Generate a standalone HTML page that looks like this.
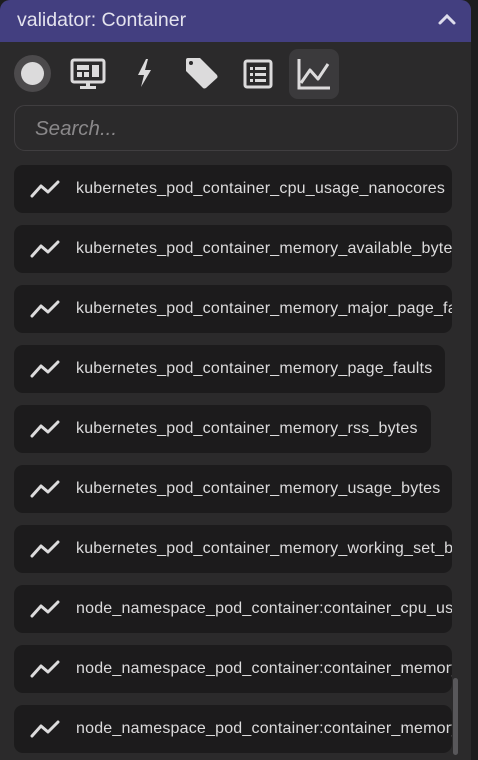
<!DOCTYPE html>
<html><head><style>
*{box-sizing:border-box;margin:0;padding:0}
body{width:478px;height:760px;background:#1d1d1e;font-family:"Liberation Sans",sans-serif;overflow:hidden;position:relative}
.panel{position:absolute;left:0;top:0;width:471px;height:760px;background:#2b2a2b;border-radius:10px 10px 0 0;overflow:hidden}
.hdr{height:42px;background:#433f80;color:#e4e3ee;font-size:19.5px;padding:9px 0 0 17px;position:relative}
.hdr svg{position:absolute;right:14px;top:12px}
.tools{position:absolute;top:48px;left:0;width:471px;height:52px}
.tools>*{position:absolute}
.search{position:absolute;left:14px;top:105px;width:444px;height:46px;border:1px solid #403e40;border-radius:11px;color:#8a888a;font-style:italic;font-size:20.5px;padding:11px 0 0 20px}
.list{position:absolute;left:14px;top:165px;width:438px;overflow:hidden}
.item{display:block;width:max-content;max-width:438px;height:48px;margin-bottom:12px;background:#1c1b1c;border-radius:9px;color:#dcdbdc;font-size:16px;letter-spacing:0.2px;line-height:48px;padding:0 13px 0 62px;position:relative;white-space:nowrap;overflow:hidden}
.item svg{position:absolute;left:16px;top:15px}
.sb{position:absolute;left:453px;top:678px;width:5px;height:77px;background:#58575a;border-radius:3px}
</style></head><body>
<div class="panel">
<div class="hdr">validator: Container
<svg width="20" height="14" viewBox="0 0 20 14"><path d="M3 11 L10 4 L17 11" fill="none" stroke="#dddcec" stroke-width="3" stroke-linecap="round"/></svg></div>
<div class="tools">
<div style="left:14px;top:7px;width:37px;height:37px;border-radius:50%;background:#4c4a4c"></div>
<div style="left:21px;top:14px;width:23px;height:23px;border-radius:50%;background:#dcdbdc"></div>
<svg style="left:70px;top:10px" width="36" height="32" viewBox="0 0 36 32"><rect x="2" y="2" width="32" height="22" rx="2" fill="none" stroke="#dcdbdc" stroke-width="3"/><rect x="7" y="7" width="12" height="5" fill="#dcdbdc"/><rect x="22" y="7" width="7" height="12" fill="#dcdbdc"/><rect x="7" y="14" width="5" height="5" fill="#dcdbdc"/><rect x="14" y="14" width="5" height="5" fill="#dcdbdc"/><rect x="16" y="24" width="4" height="4" fill="#dcdbdc"/><rect x="10" y="28" width="16" height="3" fill="#dcdbdc"/></svg>
<svg style="left:135px;top:10px" width="20" height="30" viewBox="0 0 20 30"><path d="M11 1 L3 17 L9 17 L6 29 L16 12 L10 12 L13 1Z" fill="#dcdbdc"/></svg>
<svg style="left:184px;top:8px" width="36" height="34" viewBox="0 0 36 34"><path d="M2 4 Q2 2 4 2 L16 2 L33 19 Q34 21 33 22 L22 32 Q20 33 19 32 L2 15Z" fill="#dcdbdc"/><circle cx="7" cy="7" r="2" fill="#2b2a2b"/></svg>
<svg style="left:243px;top:11px" width="30" height="30" viewBox="0 0 30 30"><rect x="2" y="2" width="26" height="26" rx="2" fill="none" stroke="#dcdbdc" stroke-width="3"/><rect x="7" y="8" width="3" height="3" fill="#dcdbdc"/><rect x="12" y="8" width="11" height="3" fill="#dcdbdc"/><rect x="7" y="14" width="3" height="3" fill="#dcdbdc"/><rect x="12" y="14" width="11" height="3" fill="#dcdbdc"/><rect x="7" y="20" width="3" height="3" fill="#dcdbdc"/><rect x="12" y="20" width="11" height="3" fill="#dcdbdc"/></svg>
<div style="left:289px;top:1px;width:50px;height:50px;border-radius:9px;background:#3b3a3c"></div>
<svg style="left:296px;top:9px" width="36" height="34" viewBox="0 0 36 34"><path d="M3 2 L3 31 L34 31" fill="none" stroke="#dcdbdc" stroke-width="3"/><path d="M5 26 L14 13 L22 22 L32 7" fill="none" stroke="#dcdbdc" stroke-width="3" stroke-linejoin="round"/></svg>
</div>
<div class="search">Search...</div>
<div class="list">
<div class="item"><svg width="30" height="18" viewBox="0 0 30 18"><path d="M2 16 L11 6 L18 12 L28 2" fill="none" stroke="#dcdbdc" stroke-width="3" stroke-linecap="round" stroke-linejoin="round"/></svg>kubernetes_pod_container_cpu_usage_nanocores</div>
<div class="item"><svg width="30" height="18" viewBox="0 0 30 18"><path d="M2 16 L11 6 L18 12 L28 2" fill="none" stroke="#dcdbdc" stroke-width="3" stroke-linecap="round" stroke-linejoin="round"/></svg>kubernetes_pod_container_memory_available_bytes</div>
<div class="item"><svg width="30" height="18" viewBox="0 0 30 18"><path d="M2 16 L11 6 L18 12 L28 2" fill="none" stroke="#dcdbdc" stroke-width="3" stroke-linecap="round" stroke-linejoin="round"/></svg>kubernetes_pod_container_memory_major_page_faults</div>
<div class="item"><svg width="30" height="18" viewBox="0 0 30 18"><path d="M2 16 L11 6 L18 12 L28 2" fill="none" stroke="#dcdbdc" stroke-width="3" stroke-linecap="round" stroke-linejoin="round"/></svg>kubernetes_pod_container_memory_page_faults</div>
<div class="item"><svg width="30" height="18" viewBox="0 0 30 18"><path d="M2 16 L11 6 L18 12 L28 2" fill="none" stroke="#dcdbdc" stroke-width="3" stroke-linecap="round" stroke-linejoin="round"/></svg>kubernetes_pod_container_memory_rss_bytes</div>
<div class="item"><svg width="30" height="18" viewBox="0 0 30 18"><path d="M2 16 L11 6 L18 12 L28 2" fill="none" stroke="#dcdbdc" stroke-width="3" stroke-linecap="round" stroke-linejoin="round"/></svg>kubernetes_pod_container_memory_usage_bytes</div>
<div class="item"><svg width="30" height="18" viewBox="0 0 30 18"><path d="M2 16 L11 6 L18 12 L28 2" fill="none" stroke="#dcdbdc" stroke-width="3" stroke-linecap="round" stroke-linejoin="round"/></svg>kubernetes_pod_container_memory_working_set_bytes</div>
<div class="item"><svg width="30" height="18" viewBox="0 0 30 18"><path d="M2 16 L11 6 L18 12 L28 2" fill="none" stroke="#dcdbdc" stroke-width="3" stroke-linecap="round" stroke-linejoin="round"/></svg>node_namespace_pod_container:container_cpu_usage</div>
<div class="item"><svg width="30" height="18" viewBox="0 0 30 18"><path d="M2 16 L11 6 L18 12 L28 2" fill="none" stroke="#dcdbdc" stroke-width="3" stroke-linecap="round" stroke-linejoin="round"/></svg>node_namespace_pod_container:container_memory_rss</div>
<div class="item"><svg width="30" height="18" viewBox="0 0 30 18"><path d="M2 16 L11 6 L18 12 L28 2" fill="none" stroke="#dcdbdc" stroke-width="3" stroke-linecap="round" stroke-linejoin="round"/></svg>node_namespace_pod_container:container_memory_cache</div>
</div>
<div class="sb"></div>
</div>
</body></html>
